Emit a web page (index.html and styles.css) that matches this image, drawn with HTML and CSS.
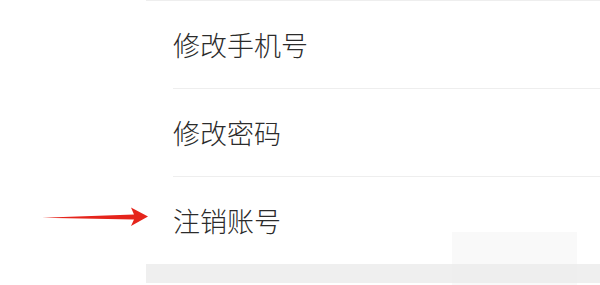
FILE: index.html
```html
<!DOCTYPE html>
<html>
<head>
    <meta name="viewport" content="width=device-width, initial-scale=1.0">
    <title>账号设置</title>
    <link rel="stylesheet" href="styles.css">
</head>
<body>
    <div class="settings">
        <div class="settings-list">
            <div class="settings-item">修改手机号</div>
            <div class="settings-item">修改密码</div>
            <div class="settings-item">注销账号</div>
        </div>
        <div class="settings-gap"></div>
    </div>

    <!-- annotation arrow pointing at the item -->
    <svg class="pointer-arrow" width="110" height="24" viewBox="0 0 110 24">
        <path d="M0 12.8 L92 9.5 L89 2.5 L106 11.5 L89 21 L92 14.5 Z" fill="#e5241b"/>
    </svg>

    <div class="watermark"></div>
</body>
</html>
```

FILE: styles.css
```css
body {
    margin: 0;
    padding: 0;
    background-color: #ffffff;
    font-family: "Noto Sans CJK SC", "Noto Sans", sans-serif;
    color: #2b2b2b;
}

.settings {
    margin-left: 146px;
}

.settings-list {
    border-top: 1px solid #eeeeee;
}

.settings-item {
    display: flex;
    align-items: center;
    height: 87px;
    margin-left: 27px;
    font-size: 27px;
    font-weight: 300;
    line-height: 1;
    border-bottom: 1px solid #eeeeee;
}

.settings-item:last-child {
    border-bottom: none;
}

.settings-gap {
    height: 19px;
    background-color: #efefef;
}

.pointer-arrow {
    position: absolute;
    left: 42px;
    top: 205px;
}

.watermark {
    position: absolute;
    left: 452px;
    top: 232px;
    width: 125px;
    height: 53px;
    background-color: rgba(236, 236, 236, 0.3);
}
```
